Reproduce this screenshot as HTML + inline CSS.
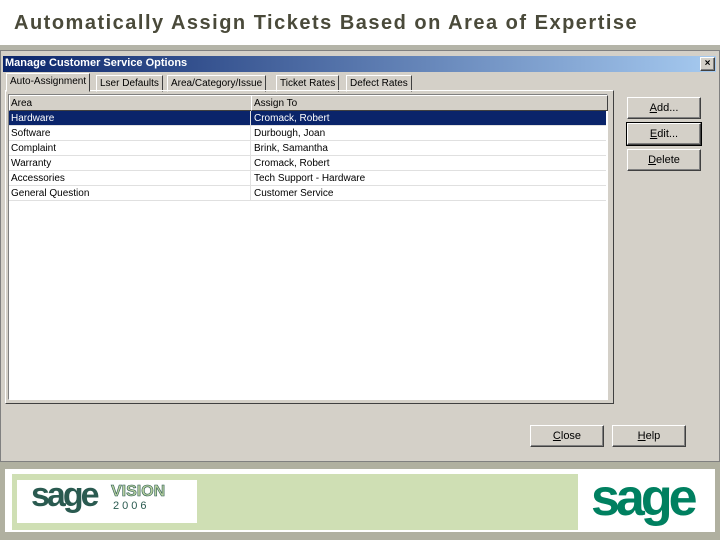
<!DOCTYPE html>
<html><head><style>
body{margin:0;width:720px;height:540px;overflow:hidden;background:#fff;font-family:"Liberation Sans",sans-serif;position:relative}
.a{position:absolute}
.btn{position:absolute;background:#d4d0c8;border:1px solid;border-color:#fff #404040 #404040 #fff;box-shadow:inset -1px -1px #808080;font-size:11px;text-align:center;line-height:20px}
.row{position:absolute;left:9px;width:597px;height:14px;border-bottom:1px solid #e0e0e0;font-size:10px;line-height:15px}
.row span{position:absolute;left:2px}.row span+span{left:245px}
.tab{position:absolute;top:75px;height:15px;font-size:10px;line-height:15px;border:1px solid;border-color:#fff #404040 transparent #fff;padding:0 3px;color:#000}
</style></head><body>
<div class="a" style="left:14px;top:12px;font-size:20px;font-weight:bold;color:#4a4a3a;letter-spacing:1.5px">Automatically Assign Tickets Based on Area of Expertise</div>
<div class="a" style="left:0;top:45px;width:720px;height:5px;background:#b4b4a8"></div>
<div class="a" style="left:0;top:50px;width:718px;height:410px;background:#d4d0c8;border:1px solid #808080"></div>
<div class="a" style="left:3px;top:56px;width:713px;height:16px;background:linear-gradient(90deg,#0a246a,#a6caf0)"></div>
<div class="a" style="left:5px;top:57px;color:#fff;font-weight:bold;font-size:11px">Manage Customer Service Options</div>
<div class="btn" style="left:700px;top:57px;width:13px;height:12px;line-height:12px;font-size:10px;font-weight:bold">×</div>
<div class="tab" style="left:6px;top:73px;height:17px;background:#d4d0c8;z-index:2">Auto-Assignment</div>
<div class="tab" style="left:96px">Lser Defaults</div>
<div class="tab" style="left:167px">Area/Category/Issue</div>
<div class="tab" style="left:276px">Ticket Rates</div>
<div class="tab" style="left:346px">Defect Rates</div>
<div class="a" style="left:5px;top:90px;width:607px;height:312px;border:1px solid;border-color:#fff #404040 #404040 #fff"></div>
<div class="a" style="left:8px;top:94px;width:598px;height:304px;background:#fff;border:1px solid;border-color:#808080 #fff #fff #808080"></div>
<div class="a" style="left:9px;top:95px;width:240px;height:14px;background:#d4d0c8;border:1px solid;border-color:#fff #404040 #404040 #fff;font-size:10px;line-height:15px;padding-left:1px">Area</div>
<div class="a" style="left:251px;top:95px;width:353px;height:14px;background:#d4d0c8;border:1px solid;border-color:#fff #404040 #404040 #fff;font-size:10px;line-height:15px;padding-left:2px">Assign To</div>
<div class="row" style="top:111px;background:#0a246a;color:#fff"><span>Hardware</span><span>Cromack, Robert</span></div>
<div class="row" style="top:126px"><span>Software</span><span>Durbough, Joan</span></div>
<div class="row" style="top:141px"><span>Complaint</span><span>Brink, Samantha</span></div>
<div class="row" style="top:156px"><span>Warranty</span><span>Cromack, Robert</span></div>
<div class="row" style="top:171px"><span>Accessories</span><span>Tech Support - Hardware</span></div>
<div class="row" style="top:186px"><span>General Question</span><span>Customer Service</span></div>
<div class="a" style="left:250px;top:111px;width:1px;height:90px;background:#e0e0e0"></div>
<div class="btn" style="left:627px;top:97px;width:72px;height:20px"><u>A</u>dd...</div>
<div class="btn" style="left:627px;top:123px;width:72px;height:20px;outline:1px solid #000"><u>E</u>dit...</div>
<div class="btn" style="left:627px;top:149px;width:72px;height:20px"><u>D</u>elete</div>
<div class="btn" style="left:530px;top:425px;width:72px;height:20px"><u>C</u>lose</div>
<div class="btn" style="left:612px;top:425px;width:72px;height:20px"><u>H</u>elp</div>
<div class="a" style="left:0;top:462px;width:720px;height:78px;background:#b0b0a0"></div>
<div class="a" style="left:5px;top:469px;width:710px;height:63px;background:#fff"></div>
<div class="a" style="left:12px;top:474px;width:566px;height:56px;background:#cfdfb4"></div>
<div class="a" style="left:17px;top:480px;width:180px;height:43px;background:#fff"></div>
<div class="a" style="left:31px;top:476px;font-size:34px;font-weight:bold;color:#2a5a50;letter-spacing:-3px">sage</div>
<div class="a" style="left:111px;top:483px;font-size:16px;font-weight:bold;color:#b8d0a0;-webkit-text-stroke:0.6px #2a5a50">VISION</div>
<div class="a" style="left:113px;top:500px;font-size:11px;color:#2a5a50;letter-spacing:3px">2006</div>
<div class="a" style="left:591px;top:468px;font-size:52px;font-weight:bold;color:#008060;letter-spacing:-4px">sage</div>
</body></html>
